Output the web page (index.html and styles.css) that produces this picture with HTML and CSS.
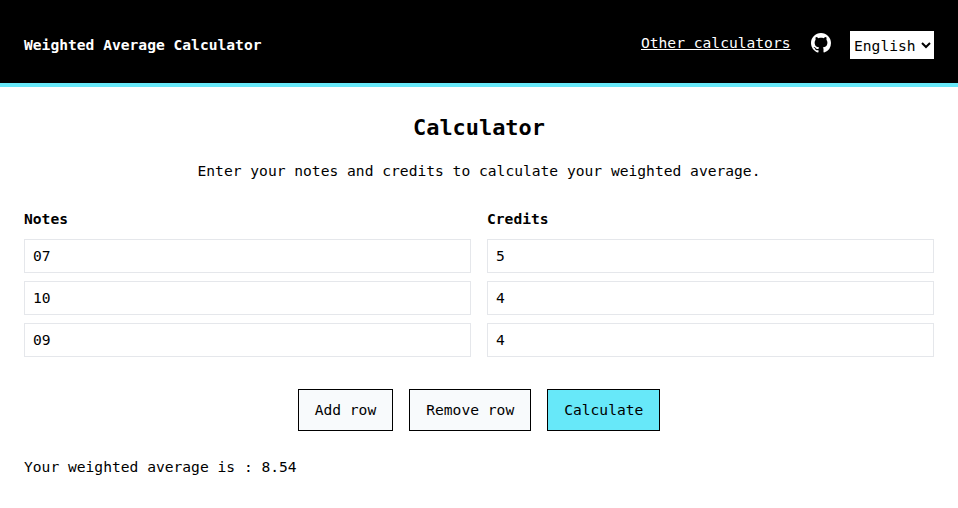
FILE: index.html
```html
<!DOCTYPE html>
<html lang="en">
<head>
  <meta charset="utf-8">
  <title>Weighted Average Calculator</title>
  <link rel="stylesheet" href="styles.css">
</head>
<body>
  <header class="header">
    <h1 class="brand">Weighted Average Calculator</h1>
    <nav class="nav">
      <a class="nav-link" href="#">Other calculators</a>
      <a class="github" href="#" aria-label="GitHub">
        <svg viewBox="0 0 16 16" width="20" height="20" fill="currentColor"><path d="M8 0C3.58 0 0 3.58 0 8c0 3.54 2.29 6.53 5.47 7.59.4.07.55-.17.55-.38 0-.19-.01-.82-.01-1.49-2.01.37-2.53-.49-2.69-.94-.09-.23-.48-.94-.82-1.13-.28-.15-.68-.52-.01-.53.63-.01 1.08.58 1.23.82.72 1.21 1.87.87 2.33.66.07-.52.28-.87.51-1.07-1.78-.2-3.64-.89-3.64-3.95 0-.87.31-1.59.82-2.15-.08-.2-.36-1.02.08-2.12 0 0 .67-.21 2.2.82.64-.18 1.32-.27 2-.27s1.36.09 2 .27c1.53-1.04 2.2-.82 2.2-.82.44 1.1.16 1.92.08 2.12.51.56.82 1.27.82 2.15 0 3.07-1.87 3.75-3.65 3.95.29.25.54.73.54 1.48 0 1.07-.01 1.93-.01 2.2 0 .21.15.46.55.38A8.01 8.01 0 0 0 16 8c0-4.42-3.58-8-8-8z"/></svg>
      </a>
      <select class="language" aria-label="Language">
        <option>English</option>
      </select>
    </nav>
  </header>
  <main class="main">
    <h2 class="title">Calculator</h2>
    <p class="intro">Enter your notes and credits to calculate your weighted average.</p>
    <div class="grid">
      <span class="label">Notes</span>
      <span class="label">Credits</span>
      <input class="field" value="07">
      <input class="field" value="5">
      <input class="field" value="10">
      <input class="field" value="4">
      <input class="field" value="09">
      <input class="field" value="4">
    </div>
    <div class="actions">
      <button class="button">Add row</button>
      <button class="button">Remove row</button>
      <button class="button primary">Calculate</button>
    </div>
    <p class="result">Your weighted average is : 8.54</p>
  </main>
</body>
</html>
```
FILE: styles.css
```css
* {
  box-sizing: border-box;
  margin: 0;
  padding: 0;
}

body {
  font: 14.61px/24px Consolas, "DejaVu Sans Mono", monospace;
  color: #000;
  background: #fff;
}

input,
button,
select {
  font: inherit;
  color: inherit;
  border-radius: 0;
}

.header {
  display: flex;
  justify-content: space-between;
  align-items: center;
  height: 87px;
  padding: 6px 24px 0;
  color: #fff;
  background: #000;
  border-bottom: 4px solid #67e8f9;
}

.brand {
  font-size: inherit;
  font-weight: 700;
}

.nav {
  display: flex;
  align-items: center;
}

.nav-link {
  margin: -4px 20px 0 0;
  color: inherit;
  text-decoration: underline;
}

.github {
  display: flex;
  margin: -4px 19.5px 0 0;
  color: inherit;
}

.language {
  width: 84px;
  height: 28px;
  padding-top: 2px;
  color: #000;
  background: #fff;
  border: 0;
}

.main {
  padding: 24px;
}

.title {
  padding-top: 1px;
  font-size: 21.92px;
  line-height: 32px;
  text-align: center;
}

.intro {
  margin-top: 15px;
  text-align: center;
}

.grid {
  display: grid;
  grid-template-columns: 1fr 1fr;
  gap: 8px 16px;
  margin-top: 24px;
}

.label {
  font-weight: 700;
}

.field {
  width: 100%;
  height: 34px;
  padding: 0 8px 2px;
  background: #fff;
  border: 1px solid #e5e7eb;
}

.actions {
  display: flex;
  justify-content: center;
  gap: 16px;
  margin-top: 32px;
}

.button {
  height: 42px;
  padding: 0 16px;
  background: #f8fafc;
  border: 1px solid #000;
}

.primary {
  background: #67e8f9;
}

.result {
  margin-top: 24px;
}
```
